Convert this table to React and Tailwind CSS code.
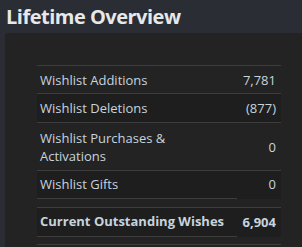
import React from 'react';

const rows = [
  { label: 'Wishlist Additions', value: '7,781', h: 'h-[28px]', dark: false },
  { label: 'Wishlist Deletions', value: '(877)', h: 'h-[29px]', dark: true },
  { label: 'Wishlist Purchases & Activations', value: '0', h: 'h-[48px]', dark: false },
];

const App = () => {
  return (
    <div
      className="w-[302px] h-[247px] overflow-hidden bg-[#2a2d33] text-[13px] text-[#c6d4df]"
      style={{ fontFamily: '"Open Sans", "Liberation Sans", sans-serif' }}
    >
      <div className="h-[33px] pl-[6px] pt-[4px] text-[20px] leading-[26px] font-bold tracking-[-0.5px] text-[#e6e8ea]">
        Lifetime Overview
      </div>

      <div className="ml-[5px] h-[240px] rounded-tl-[3px] bg-[#232323] pt-[32px] pl-[32px]">
        <div className="w-[244px]">
          {rows.map((r) => (
            <div
              key={r.label}
              className={`flex items-center border-t border-[#3d3d3d] ${r.h} ${r.dark ? 'bg-[#1e1e1e]' : ''}`}
            >
              <div className="w-[200px] pl-[3px] leading-[18px] pr-[40px]">{r.label}</div>
              <div className="flex-1 text-right pr-[5px] leading-[18px]">{r.value}</div>
            </div>
          ))}

          {/* Gifts row */}
          <div className="flex h-[29px] border-t border-[#3d3d3d] bg-[#1e1e1e]">
            <div className="w-[200px] pl-[3px] flex items-center border-b border-[#3d3d3d]">Wishlist Gifts</div>
            <div className="flex-1 flex items-center justify-end pr-[5px]">0</div>
          </div>

          <div className="h-[8px]" />

          {/* Total row */}
          <div className="flex h-[30px] border-t border-[#3d3d3d] bg-[#1e1e1e] font-bold">
            <div className="w-[200px] pl-[3px] flex items-center border-b border-[#3d3d3d]">
              Current Outstanding Wishes
            </div>
            <div className="flex-1 flex items-center justify-end pr-[5px]">6,904</div>
          </div>

          <div className="h-[8px] border-b border-[#3d3d3d]" />
        </div>
      </div>
    </div>
  );
};

export default App;
